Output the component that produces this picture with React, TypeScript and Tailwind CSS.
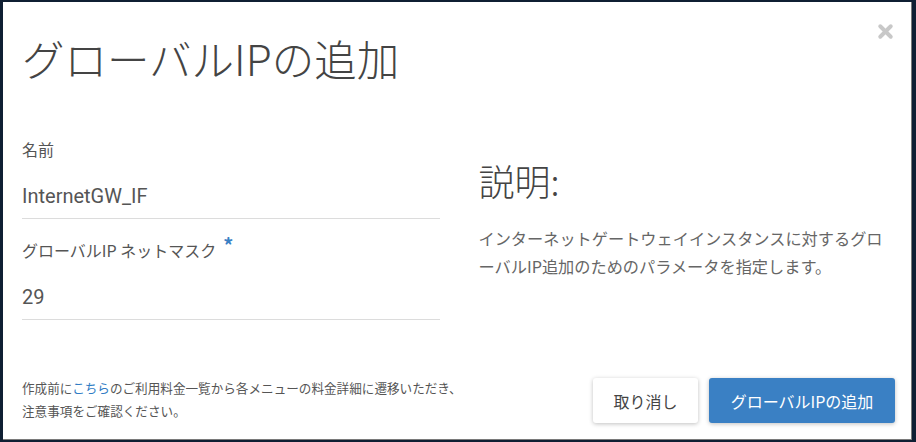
import { X } from 'lucide-react';

const jp = { fontFamily: '"Noto Sans CJK JP", "Noto Sans", sans-serif' };
const roboto = { fontFamily: 'Roboto, "Noto Sans CJK JP", sans-serif' };

function Field({ label, value, required }: { label: string; value: string; required?: boolean }) {
  return (
    <div className="flex flex-col">
      <div className="flex items-start text-[16px] leading-[22px] text-[#555]">
        <span>{label}</span>
        {required && <span className="ml-[7px] -mt-[5px] text-[20px] font-bold text-[#3a80c4]">*</span>}
      </div>
      <div
        className="mt-[23px] h-[36px] border-b border-[#dcdcdc] text-[20px] leading-[26px] text-[#555]"
        style={roboto}
      >
        {value}
      </div>
    </div>
  );
}

export default function App() {
  return (
    <div className="w-[916px] h-[442px] bg-[#0f1f33] overflow-hidden" style={jp}>
      <div className="ml-[3px] mt-[2px] w-[909px] h-[438px] bg-white border-r border-b border-[#7a7a7a] flex flex-col">
        {/* header */}
        <div className="relative px-[19px] pt-[28px] h-[120px]">
          <h1 className="text-[42.5px] leading-[56px] font-light text-[#444]">
            グローバルIPの追加
          </h1>
          <button className="absolute right-[15px] top-[19px] text-[#c8c8c8]">
            <X className="w-[21px] h-[21px]" strokeWidth={4.5} />
          </button>
        </div>

        {/* body */}
        <div className="flex px-[19px] pt-[16px]">
          <div className="w-[418px] flex flex-col gap-[20px]">
            <Field label="名前" value="InternetGW_IF" />
            <Field label="グローバルIP ネットマスク" value="29" required />
          </div>
          <div className="ml-[39px] w-[414px] pt-[20px]">
            <h2 className="text-[36px] leading-[44px] font-light text-[#444]">説明:</h2>
            <p className="mt-[22px] text-[16.2px] leading-[28px] text-[#666]">
              インターネットゲートウェイインスタンスに対するグローバルIP追加のためのパラメータを指定します。
            </p>
          </div>
        </div>

        {/* footer */}
        <div className="mt-auto flex items-end justify-between pl-[19px] pr-[16px] pb-[16px]">
          <p className="mb-[1px] text-[12.6px] leading-[23px] text-[#555]">
            作成前に<a className="text-[#2f7cc4]">こちら</a>のご利用料金一覧から各メニューの料金詳細に遷移いただき、
            <br />
            注意事項をご確認ください。
          </p>
          <div className="flex gap-[11px]">
            <button className="w-[105px] h-[45px] rounded-[3px] bg-white text-[16px] text-[#444] shadow-[0_1px_4px_rgba(0,0,0,0.25)]">
              取り消し
            </button>
            <button className="w-[186px] h-[45px] rounded-[3px] bg-[#3a80c4] text-[16px] text-white shadow-[0_1px_4px_rgba(0,0,0,0.25)]">
              グローバルIPの追加
            </button>
          </div>
        </div>
      </div>
    </div>
  );
}
